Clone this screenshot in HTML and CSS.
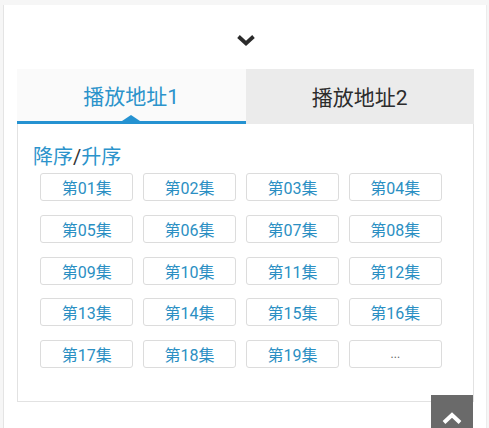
FILE: index.html
```html
<!DOCTYPE html>
<html lang="zh">
<head>
<meta charset="utf-8">
<title>播放地址</title>
<link rel="stylesheet" href="styles.css">
</head>
<body>
<div class="page">
  <div class="toggle">
    <svg width="20" height="13" viewBox="0 0 20 13"><path d="M2.5 2.5 L10 9.5 L17.5 2.5" fill="none" stroke="#2b2b2b" stroke-width="3.8"/></svg>
  </div>
  <div class="panel">
    <div class="tabs">
      <div class="tab active">播放地址1</div>
      <div class="tab">播放地址2</div>
    </div>
    <div class="body">
      <div class="sort"><span class="blue">降序</span><span class="slash">/</span><span class="blue">升序</span></div>
      <div class="grid">
        <a class="ep">第01集</a><a class="ep">第02集</a><a class="ep">第03集</a><a class="ep">第04集</a>
        <a class="ep">第05集</a><a class="ep">第06集</a><a class="ep">第07集</a><a class="ep">第08集</a>
        <a class="ep">第09集</a><a class="ep">第10集</a><a class="ep">第11集</a><a class="ep">第12集</a>
        <a class="ep">第13集</a><a class="ep">第14集</a><a class="ep">第15集</a><a class="ep">第16集</a>
        <a class="ep">第17集</a><a class="ep">第18集</a><a class="ep">第19集</a><a class="ep more">...</a>
      </div>
    </div>
  </div>
</div>
<div class="totop">
  <svg width="22" height="14" viewBox="0 0 22 14"><path d="M3 11.5 L11 4 L19 11.5" fill="none" stroke="#ffffff" stroke-width="4"/></svg>
</div>
</body>
</html>
```
FILE: styles.css
```css
html, body {
  margin: 0;
  padding: 0;
}
body {
  background: #f6f6f6;
  font-family: Roboto, "Noto Sans CJK SC", sans-serif;
  height: 428px;
  overflow: hidden;
}
.page {
  margin: 5px 2px 0 3px;
  background: #ffffff;
  border-left: 1px solid #e4e4e4;
  border-right: 1px solid #ececec;
  height: 423px;
  padding: 0 12px 0 13px;
}
.toggle {
  height: 64px;
  display: flex;
  align-items: center;
  justify-content: center;
}
.toggle svg {
  margin-top: 6px;
}
.panel {
  width: 457px;
}
.tabs {
  display: flex;
  height: 55px;
}
.tab {
  flex: 1;
  display: flex;
  align-items: center;
  justify-content: center;
  font-size: 21px;
  color: #2c2c2c;
  background: #ebebeb;
  position: relative;
  padding-bottom: 2px;
}
.tab.active {
  background: #fafafa;
  color: #2b93cb;
  border-bottom: 3px solid #2592d1;
  padding-bottom: 0;
}
.tab.active::after {
  content: "";
  position: absolute;
  left: 50%;
  bottom: 0;
  margin-left: -9px;
  border-left: 9px solid transparent;
  border-right: 9px solid transparent;
  border-bottom: 6px solid #2592d1;
}
.body {
  border: 1px solid #e2e2e2;
  border-top: none;
  height: 278px;
  box-sizing: border-box;
  padding: 21px 0 0 15px;
}
.sort {
  font-size: 20px;
  line-height: 24px;
  height: 24px;
}
.blue {
  color: #2b93cb;
}
.slash {
  color: #333;
}
.grid {
  margin: 4px 0 0 7px;
  width: 402px;
  display: grid;
  grid-template-columns: repeat(4, 1fr);
  column-gap: 9.5px;
  row-gap: 13.75px;
}
.ep {
  height: 28px;
  box-sizing: border-box;
  border: 1px solid #dcdcdc;
  border-radius: 3px;
  display: flex;
  align-items: center;
  justify-content: center;
  font-size: 16px;
  color: #2b8fc3;
}
.ep.more {
  color: #666;
  font-size: 12px;
}
.totop {
  position: fixed;
  left: 431px;
  top: 395px;
  width: 42px;
  height: 42px;
  background: #6a6a6a;
  display: flex;
  justify-content: center;
  align-items: flex-start;
}
.totop svg {
  margin-top: 16px;
}
```
